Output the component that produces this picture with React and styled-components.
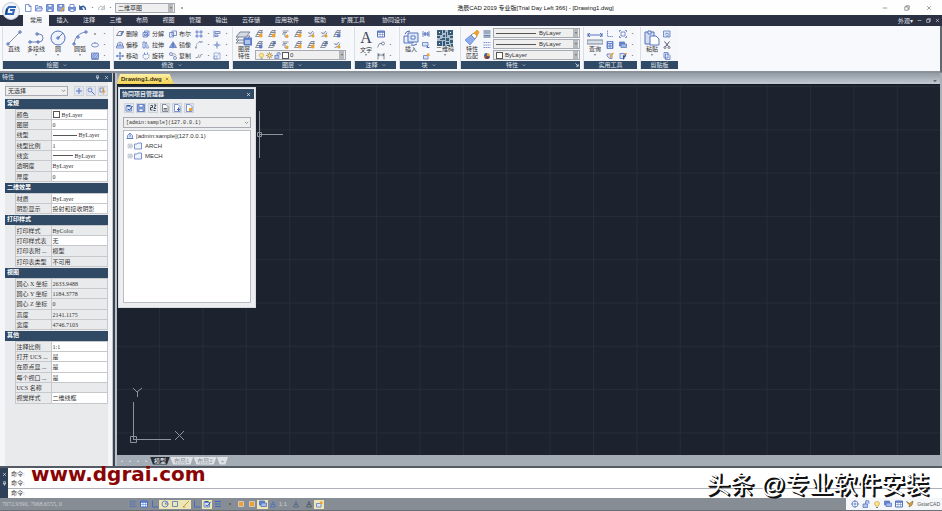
import React from 'react';
import styled, { createGlobalStyle } from 'styled-components';

const GlobalStyle = createGlobalStyle`
    * { box-sizing: border-box; }
    body {
        margin: 0;
        font-family: 'Liberation Sans', 'Noto Sans CJK SC', sans-serif;
        font-size: 6px;
        line-height: 8px;
        color: #333;
        background: #fff;
    }
    button, select, input { font: inherit; color: inherit; margin: 0; padding: 0; border: 0; background: none; border-radius: 0; }
    button { cursor: pointer; }
    select { appearance: none; min-width: 0; }
`;

const navy = '#2b3043';
const blue = '#304a66';

const Page = styled.div`
    position: relative;
    display: flex;
    flex-direction: column;
    min-height: 100vh;
    overflow: hidden;
`;

const Svg = styled.svg`
    display: block;
    flex: none;
    width: ${p => p.$size}px;
    height: ${p => p.$size}px;
    fill: none;
    stroke: ${p => p.$color || '#5573bd'};
    stroke-width: ${p => p.$stroke || 1.5};
`;

const o = '#eda12e';
const pale = '#dbe5f8';

const layerBase = (
    <g fill="#f5f6f8" stroke="#6b7486">
        <path d="M4 9h9l-3 4H1z" />
        <path d="M6 5h9l-3 4H3z" />
        <path d="M8 1h7l-3 4H5z" fill="#d4dae6" />
    </g>
);

const icons = {
    file: <path d="M3 1h7l4 4v10H3zM10 1v4h4" fill="#fff" />,
    open: <path d="M1 14V3h5l2 2h5v3M1 14l3-6h11l-2 6z" fill={pale} />,
    save: <g><path d="M1 1h14v14H1z" fill="#8ba5e3" /><path d="M4 1h8v5H4zM4 10h8v5H4z" fill="#fff" /></g>,
    saveAs: <g><path d="M1 1h13v13H1z" fill="#8ba5e3" /><path d="M4 1h7v5H4z" fill="#fff" /><path d="M7 15l7-8" stroke={o} strokeWidth="3" /></g>,
    print: <g><path d="M1 6h14v7H1z" fill="#7f9be0" /><path d="M4 6V1h8v5M4 10h8v5H4z" fill="#fff" /></g>,
    undo: <g stroke="#31599f"><path d="M3 8c5-6 10-3 10 4" strokeWidth="3" /><path d="M1 3v8h7z" fill="#31599f" /></g>,
    redo: <g stroke="#aeb4bd"><path d="M13 8C8 2 3 5 3 12" strokeWidth="2" /><path d="M15 3v8H8z" fill="#dfe2e6" /></g>,
    down: <path d="M3 5h10l-5 6z" fill="#666" stroke="none" />,
    chevron: <path d="M3 6l5 5 5-5" strokeWidth="2.5" />,
    min: <path d="M2 8h12" />,
    restore: <path d="M2 5h9v9H2zM5 5V2h9v9h-3" />,
    close: <path d="M3 3l10 10M13 3L3 13" />,
    pin: <path d="M5 2h6v7H5zM3 9h10M8 9v6" />,

    line: <g><path d="M2 14L14 2" stroke="#8a93a3" strokeWidth="1" /><path d="M1 13h2v2H1zM13 1h2v2h-2z" strokeWidth="1" /></g>,
    polyline: <g strokeWidth="1"><path d="M2 12h9a4 4 0 0 0 0-8H9" stroke="#6f83b4" /><path d="M1 11h2v2H1zM9 11h2v2H9zM8 3h2v2H8z" /></g>,
    circle: <g strokeWidth="1"><circle cx="8" cy="8" r="7" fill="#eef3fc" /><path d="M8 8l5-5M7 7h2v2H7z" /></g>,
    arc: <g strokeWidth="1"><path d="M2 14C3 7 7 3 14 2" stroke="#6f83b4" /><path d="M1 13h2v2H1zM5 6h2v2H5zM13 1h2v2h-2z" /></g>,
    dot: <circle cx="8" cy="8" r="1.5" fill="#333" stroke="none" />,
    ellipse: <g><ellipse cx="8" cy="8" rx="7" ry="4" /><path d="M8 2v3" /></g>,
    hatch: <g><path d="M1 2h14v11H1z" fill="#b4c6ee" /><path d="M3 13L12 2M8 13l7-8M1 10l7-8M1 15h14" /></g>,

    erase: <g><path d="M6 3h9l-5 8H1z" fill="#f6f6f6" stroke="#555d6b" /><path d="M10 6l5-3-4 8z" fill="#8ba5e3" /></g>,
    explode: <g><path d="M2 5h9v9H2zM5 5V2h9v9h-3" fill={pale} /><path d="M5 8h4v3H5z" /></g>,
    boolean: <path d="M1 5h8v9H1zM6 2h9v9H6z" fill="#edf1fb" />,
    array: <path d="M2 2h4v4H2zM10 2h4v4h-4zM2 10h4v4H2zM10 10h4v4h-4z" fill={pale} />,
    align: <path d="M2 1v14M4 3h10v4H4zM4 10h6v3H4z" fill={pale} />,
    offset: <g><path d="M3 10V5q5-6 10 0v5" /><path d="M1 10h14v4H1zM6 10V7q2-3 4 0v3" fill={pale} /></g>,
    stretch: <g><path d="M2 2v12h4V2z" /><path d="M8 2l6 12H8z" fill={pale} strokeDasharray="2 1" /></g>,
    mirror: <path d="M7 3v10H1zM9 3v10h6zM8 1v14" fill="#8ba5e3" />,
    fillet: <path d="M3 15V9q0-6 6-6h6M1 15v-5M8 1h7" strokeDasharray="3 1" stroke="#7681a0" />,
    trim: <path d="M8 1v5M8 10v5M1 8h5M10 8h5M6 6h4v4H6z" />,
    move: <g stroke="#4263ad"><path d="M8 2v12M2 8h12" /><path d="M8 0l2 3H6zM8 16l2-3H6zM0 8l3-2v4zM16 8l-3-2v4z" fill="#4263ad" strokeWidth=".5" /></g>,
    rotate: <g><path d="M5 3a6 6 0 1 0 6 0" strokeDasharray="3 1" /><path d="M5 1v4h4M11 1v4" /></g>,
    copy: <g><circle cx="4" cy="4" r="3" /><circle cx="12" cy="12" r="3" /><path d="M9 2l5 5M7 6l3 3" stroke="#666" /></g>,
    breakLine: <path d="M1 11h5l2-6M9 12l3-7h3" stroke="#7681a0" />,
    scale: <path d="M2 2h12v12H2zM2 8h6v6H2zM9 7l4-4" strokeWidth="1" />,

    layers: (
        <g strokeWidth="1">
            <path d="M4 9h10l-4 4H0z" fill="#e6e9ee" stroke="#7c8494" />
            <path d="M4 6h10l-4 4H0z" fill="#f5f6f8" stroke="#7c8494" />
            <path d="M4 2h10l-4 5H0z" fill="#d4dae6" stroke="#7c8494" />
            <path d="M8 8h8v7H8z" fill="#6687d1" /><path d="M9 11h5M9 13h5" stroke="#fff" />
        </g>
    ),
    layerOrange: <g>{layerBase}<path d="M9 8h5v6H9z" fill={o} stroke={o} /></g>,
    layerBlue: <g>{layerBase}<path d="M9 8h5v6H9z" fill="#5e80cd" /></g>,
    layerLine: <g stroke="#6b7486"><path d="M3 2h12M4 5h8M8 6v8h5M2 8h5" /><path d="M11 10h3v5h-3z" fill={o} stroke={o} /></g>,
    layerArrow: <g>{layerBase}<path d="M8 10l5-7M10 2h4v4" stroke="#4263ad" strokeWidth="2" /></g>,
    layerFan: <g stroke="#6b7486"><path d="M2 5l5 3 5-6M3 13l8-2 3-6" fill="#d4dae6" /><path d="M10 10h4v4h-4z" fill={o} stroke={o} /></g>,
    bulb: <g><path d="M5 12Q5 10 3 8a5 5 0 1 1 10 0q-2 2-2 4z" fill="#fce798" stroke="#cda734" /><path d="M6 15h4" stroke="#555" /></g>,
    sun: <g stroke="#8e722e"><circle cx="8" cy="8" r="4" fill="#ffe08a" /><path d="M8 0v3M8 13v3M0 8h3M13 8h3M3 3l2 2M11 11l2 2M13 3l-2 2M3 13l2-2" /></g>,
    lock: <g><path d="M2 8h9v7H2zM7 8V4a3 3 0 0 1 7 0v3" fill="#b4c6ee" /></g>,

    table: <g><path d="M1 2h14v12H1z" fill="#fff" strokeWidth="2" /><path d="M1 4h14" strokeWidth="3" /><path d="M1 9h14M6 5v9M11 5v9" strokeWidth="1" /></g>,
    leader: <g stroke="#65718a"><path d="M1 13l4-8h5" /><circle cx="12" cy="5" r="3" /></g>,
    dim: <path d="M2 2v13M14 2v13M2 6h12M5 4L2 6l3 2M11 4l3 2-3 2" stroke="#596477" />,
    insert: <g strokeWidth="1"><path d="M1 6h9v7H1z" fill="#e9effb" /><path d="M5 3h10v9H5z" fill="#dfe8fa" /><path d="M8 6h4v3H8z" fill="#fff" /><path d="M2 4Q3 1 7 1M14 14q-3 2-6 1" stroke="#4263ad" /></g>,
    attr: <path d="M2 2v12M5 5v6h2V5zM10 5v6h2V5zM14 2v12M1 8h14" />,
    blockEdit: <g><path d="M1 3h11v7H1z" fill={pale} /><path d="M9 9l5 5M9 13h6" strokeWidth="2" /></g>,
    blockNew: <g><path d="M3 7h9v7H3z" fill={pale} /><path d="M10 3h5v5h-5z" fill={o} stroke="none" /></g>,
    qr: (
        <g fill="#375a77" stroke="none">
            <path d="M0 0h16v16H0z" fill="#a9bccd" />
            <path d="M0 0h5v5H0zM11 0h5v5h-5zM0 11h5v5H0zM6 0h2v3H6zM9 2h1v5H9zM6 5h2v2H6zM0 6h3v2H0zM5 8h3v2H5zM9 8h3v3H9zM13 6h3v2h-3zM6 11h2v5H6zM9 12h3v2H9zM13 10h3v3h-3zM10 15h3v1h-3zM14 14h2v2h-2zM3 9h2v1H3z" />
            <path d="M2 2h1v1H2zM13 2h1v1h-1zM2 13h1v1H2z" fill="#fff" />
        </g>
    ),

    brush: <g strokeWidth="1"><path d="M1 10l6-5 4 4-5 6z" fill="#8facea" stroke="#7a9add" /><path d="M7 5l3-2 3 3-2 3z" fill="#fff" stroke="#888" /><path d="M10 3l3-3 2 2-2 4z" fill={o} stroke={o} /></g>,
    weights: <path d="M1 2h14M1 6h14M1 10.500h14M1 14h14" stroke="#426190" strokeWidth="2" />,
    dashes: <path d="M1 3h14M1 8h14M1 13h14" strokeDasharray="3 1" />,
    wheel: <g stroke="none"><circle cx="8" cy="8" r="6" fill={o} /><path d="M8 8V2a6 6 0 0 0-6 6z" fill="#4263ad" /><path d="M8 8l-6 1a6 6 0 0 0 7 5z" fill="#9b3d3d" /><path d="M8 8v6a6 6 0 0 0 6-5z" fill="#334b86" /></g>,
    corner: <path d="M13 5v8H5M2 2l9 9" stroke="#fff" strokeWidth="3" />,

    measure: <g><path d="M1 3v4M15 3v4M1 5h14M3 3L1 5l2 2M13 3l2 2-2 2" strokeWidth="1" /><path d="M0 10h16v4H0z" fill="#d7dfe9" stroke="#7d899c" strokeWidth="1" /></g>,
    axis: <path d="M3 1v12h12" strokeDasharray="3 1" />,
    frame: <path d="M4 4h8v8H4zM4 1V1h-3v3M12 1h3v3M15 12v3h-3M4 15H1v-3" />,
    calc: <g><path d="M2 1h12v14H2z" fill="#6687d1" /><path d="M4 3h8M4 7h2M7 7h2M10 7h2M4 10h2M7 10h2M10 10h2M4 13h2M7 13h2M10 13h2" stroke="#fff" /></g>,
    screens: <g><path d="M1 2h10v8H1z" fill="#6687d1" /><path d="M4 6h11v7H4z" fill="#a5b9e7" /></g>,
    clean: <g><path d="M2 4h10v9H7L2 8z" fill={pale} /><path d="M9 7l6-5M9 7v5" stroke={o} strokeWidth="3" /></g>,
    select: <g><path d="M2 3h9v10H2z" fill={pale} /><path d="M9 15V7l3 3 2-7" stroke="#344f92" strokeWidth="2" /><path d="M11 2h4v3h-4z" fill={o} stroke="none" /></g>,
    paste: <g strokeWidth="1"><path d="M1 2h9v12H1z" fill="#d4def3" /><path d="M4 1h3v3H4z" fill="#fff" /><path d="M6 6h6l3 3v6H6z" fill="#fff" /></g>,
    clipCopy: <g><path d="M1 2h13v12H1z" fill={pale} /><path d="M4 9l4-3 4 3M6 12h6" /></g>,
    cut: <g stroke="#4b5268"><path d="M3 1l8 10M13 1L5 11" strokeWidth="2" /><circle cx="4" cy="13" r="2" /><circle cx="12" cy="13" r="2" /></g>,
    doc: <path d="M2 1h8v11H2zM5 4h6l3 3v8H5z" fill="#e6edfb" />,
    docPlus: <g><path d="M3 1h7l4 4v10H3z" fill="#fff" /><path d="M11 7v7M8 11h6" stroke="#4263ad" strokeWidth="2" /></g>,
    docOrange: <g><path d="M3 1h7l4 4v10H3z" fill="#fff" /><path d="M8 8h6v6H8z" fill={o} stroke="none" /></g>,
    refresh: <g><path d="M2 5h11v9H2z" fill={pale} /><path d="M5 10l4 2 6-8M3 3h8" stroke="#31599f" strokeWidth="2" /></g>,
    sort: <path d="M3 3h4v4H3v5h4M10 2h4l-4 7h4M9 13h4" stroke="#444a57" strokeWidth="2" />,
    docText: <g stroke="#616875"><path d="M3 1h7l4 4v10H3z" fill="#fff" /><path d="M5 9h7M5 12h7" strokeWidth="2" /></g>,
    plus: <path d="M8 2v12M2 8h12" strokeWidth="2" />,
    find: <g><circle cx="6" cy="6" r="4" fill={pale} /><path d="M9 9l6 6" strokeWidth="2" /></g>,
    quick: <g><path d="M2 2h7v8H2z" fill={pale} /><path d="M10 1l-3 7h5l-4 7" stroke={o} strokeWidth="2" /></g>,
    server: <g><path d="M3 7l5-5 5 5v6H3z" fill={pale} /><path d="M1 13h14M8 4v6" /></g>,
    folder: <path d="M1 14V4h5l2-2h7v12z" fill="#f0f4fc" />,
    expand: <g stroke="#8b96b0"><path d="M3 3h10v10H3zM5 8h6M8 5v6M13 8h3" /></g>,

    grid: <path d="M1 3h14M1 8h14M1 13h14M4 1v14M10 1v14" strokeWidth="1" />,
    ortho: <path d="M3 1v13h12" strokeWidth="2" />,
    polar: <g><circle cx="8" cy="8" r="6" /><path d="M8 8h7M8 8l4-5" /></g>,
    snap: <path d="M3 3h10v10H3z" />,
    diag: <path d="M2 14L14 2M2 14h5" stroke="#a58a28" />,
    bars: <path d="M2 3h12M2 8h12M2 13h12" strokeWidth="2" />,
    drop: <path d="M3 3h10v10H3z" fill={o} stroke="#d7dce5" />,
    person: <g><path d="M3 14l5-11 5 11zM6 9h4" /></g>,
    gear: <g><circle cx="8" cy="8" r="6" /><circle cx="8" cy="8" r="2" /><path d="M8 0v4M8 12v4M0 8h4M12 8h4" /></g>,
    bird: <path d="M1 3l6 4 7-5-2 8-6 4 1-4z" fill={o} stroke="#83703d" />,
};

const Icon = ({ name, size = 8, color, stroke }) => (
    <Svg viewBox="0 0 16 16" $size={size} $color={color} $stroke={stroke} aria-hidden="true">{icons[name]}</Svg>
);

/* ---------- title bar and menu ---------- */

const TitleBar = styled.header`
    display: grid;
    grid-template-columns: 1fr auto 1fr;
    align-items: center;
    height: 15px;
    background: #fefefe;
`;

const QuickBar = styled.div`
    display: flex;
    align-items: center;
    gap: 3px;
    padding-left: 24px;
`;

const WindowTitle = styled.h1`
    margin: 0;
    padding-left: 129px;
    font-size: 6px;
    font-weight: 400;
    line-height: 12px;
    color: #111;
    white-space: nowrap;
`;

const WindowControls = styled.div`
    display: flex;
    justify-content: flex-end;
    gap: ${p => p.$gap}px;
    padding-right: ${p => p.$right}px;
`;

const Logo = styled.div`
    position: absolute;
    left: 2px;
    top: 2px;
    z-index: 2;
    width: 18px;
    height: 18px;
    border-radius: 50%;
    background: #f1f4f9;
    border: 1px solid #c2cad6;
`;

const MenuBar = styled.nav`
    display: flex;
    align-items: center;
    height: 11px;
    padding-left: 23px;
    background: ${navy};
    color: #e4e7ee;
`;

const MenuTab = styled.button`
    width: ${p => p.$width}px;
    height: 11px;
    line-height: 9px;
    white-space: nowrap;
    background: ${p => (p.$active ? '#f6f8fc' : 'transparent')};
    color: ${p => (p.$active ? '#333' : '#e4e7ee')};
`;

const MenuEnd = styled.div`
    display: flex;
    align-items: center;
    gap: 4px;
    margin-left: auto;
    padding-right: 2px;
`;

const IconButton = styled.button`
    display: flex;
    align-items: center;
    gap: ${p => p.$gap || 0}px;
    white-space: nowrap;
`;

/* ---------- ribbon ---------- */

const Ribbon = styled.div`
    display: flex;
    gap: 3px;
    height: 47px;
    padding: 1px 2px 2px;
    background: #f8f9fc;
    border-right: 2px solid #62676f;
    border-bottom: 2px solid #8a9199;
`;

const Group = styled.section`
    display: flex;
    flex-direction: column;
    flex: 0 0 ${p => p.$width}px;
    border-left: 1px solid #dadee5;
    background: #f6f7fa;
`;

const GroupBody = styled.div`
    display: flex;
    flex: 1;
    padding-left: ${p => p.$pad || 0}px;
`;

const Caption = styled.h2`
    display: flex;
    align-items: center;
    justify-content: center;
    gap: 4px;
    height: 8px;
    margin: 0;
    font-size: 6px;
    font-weight: 400;
    line-height: 8px;
    color: #e2e7ee;
    background: ${blue};
`;

const CaptionEnd = styled.span`
    margin-left: auto;
    padding-right: 1px;
`;

const CaptionText = styled.span`
    display: flex;
    align-items: center;
    gap: 4px;
    margin-left: ${p => (p.$corner ? 'auto' : '0')};
`;

const Big = styled.button`
    display: flex;
    flex-direction: column;
    align-items: center;
    width: 22px;
    padding-top: 3px;
    line-height: 7px;
    white-space: nowrap;
`;

const Tools = styled.div`
    display: grid;
    grid-template-columns: ${p => p.$cols};
    grid-auto-rows: 11px;
    align-items: center;
    padding-top: 1px;
`;

const Combo = styled.label`
    display: flex;
    align-items: center;
    gap: ${p => p.$gap || 0}px;
    width: ${p => (p.$width ? `${p.$width}px` : 'auto')};
    height: ${p => p.$height || 10}px;
    padding: 0 1px 0 2px;
    border: 1px solid #a7abb1;
    background: ${p => p.$bg || '#efeff0'};

    select { flex: 1; height: 8px; }
`;

const ComboArrow = styled.span`
    display: flex;
    align-items: center;
    justify-content: center;
    width: 5px;
    height: 100%;
    background: ${p => (p.$plain ? 'transparent' : '#b5b8bd')};
`;

const Stack = styled.div`
    display: flex;
    flex-direction: column;
    flex: 1;
    padding-right: ${p => p.$right || 0}px;
`;

const ComboStack = styled(Stack)`
    padding-top: 1px;
    gap: 1px;
`;

const Swatch = styled.span`
    flex: none;
    width: 7px;
    height: 7px;
    border: 1px solid #555;
    background: #fff;
`;

const Rule = styled.span`
    flex: none;
    width: ${p => p.$width}px;
    height: 1px;
    background: #555;
`;

const BigTool = ({ icon, label, size = 16, arrow = true, children }) => (
    <Big type="button">
        {children || <Icon name={icon} size={size} />}
        <span>{label}</span>
        {arrow && <Icon name="down" size={4} />}
    </Big>
);

const Tool = ({ icon, label, arrow }) => (
    <IconButton type="button" $gap={arrow ? 4 : 2} aria-label={label || icon}>
        <Icon name={icon} />
        {label && <span>{label}</span>}
        {arrow && <Icon name="down" size={3} />}
    </IconButton>
);

const RibbonGroup = ({ title, width, pad, arrow = true, corner, children }) => (
    <Group $width={width}>
        <GroupBody $pad={pad}>{children}</GroupBody>
        <Caption>
            <CaptionText $corner={corner}>
                {title}
                {arrow && <Icon name="chevron" size={4} color="#cfd6df" />}
            </CaptionText>
            {corner && <CaptionEnd><Icon name="corner" size={4} /></CaptionEnd>}
        </Caption>
    </Group>
);

const BigLetter = styled.span`
    height: 16px;
    font-family: 'Liberation Serif', serif;
    font-size: 16px;
    line-height: 16px;
    color: #3c4658;
`;

const LetterLabel = styled.span`
    display: block;
    padding-top: 1px;
    line-height: 6px;
`;

const TwoLine = styled.span`
    display: block;
    width: 12px;
    white-space: normal;
`;

/* ---------- properties palette ---------- */

const Workspace = styled.div`
    display: flex;
    flex: 1;
    background: #8b939b;
`;

const Palette = styled.aside`
    display: flex;
    flex-direction: column;
    flex: 0 0 113px;
    background: #f4f6f9;
    border-right: 1px solid #c1c6cc;
`;

const PaletteTitle = styled.h2`
    display: flex;
    align-items: center;
    gap: 4px;
    height: 9px;
    margin: 0;
    padding: 0 3px 0 2px;
    font-size: 6px;
    font-weight: 400;
    line-height: 9px;
    color: #e2e7ee;
    background: ${blue};

    span { flex: 1; }
`;

const PaletteBody = styled.div`
    flex: 1;
    margin: 0 4px 0 5px;
    background: #e9eaeb;
`;

const PaletteTools = styled.div`
    display: flex;
    align-items: center;
    gap: 2px;
    height: 17px;

    label { flex: 1; margin-right: 4px; }
`;

const SquareButton = styled.button`
    display: flex;
    align-items: center;
    justify-content: center;
    width: 10px;
    height: 10px;
    border: 1px solid #ced3da;
    background: #e2e7ef;
`;

const PropertyTable = styled.table`
    width: 100%;
    margin-bottom: 1px;
    table-layout: fixed;
    border-collapse: collapse;
    font-family: 'Liberation Serif', 'Noto Sans CJK SC', serif;

    caption {
        height: 10px;
        padding-left: 2px;
        font-weight: 700;
        line-height: 9px;
        text-align: left;
        color: #fff;
        background: ${blue};
    }
    col:first-child { width: 10px; }
    col:nth-child(2) { width: 36px; }
    tr { height: 10px; }
    tr:nth-child(3n) { height: 11px; }
    th, td {
        padding: 0 1px;
        border: 1px solid #c6c8cb;
        font-weight: 400;
        line-height: 8px;
        text-align: left;
        white-space: nowrap;
        overflow: hidden;
    }
    td:first-child { border: 0; }
`;

const ValueCell = styled.td`
    background: ${p => (p.$locked ? '#e9eaeb' : '#fff')};
`;

const Value = styled.div`
    display: flex;
    align-items: center;
    gap: 2px;
`;

const sections = [
    {
        title: '常规',
        rows: [
            ['颜色', 'ByLayer', { swatch: true }],
            ['图层', '0'],
            ['线型', 'ByLayer', { rule: 24 }],
            ['线型比例', '1'],
            ['线宽', 'ByLayer', { rule: 20 }],
            ['透明度', 'ByLayer'],
            ['厚度', '0'],
        ],
    },
    {
        title: '二维效果',
        rows: [
            ['材质', 'ByLayer'],
            ['阴影显示', '投射和接收阴影'],
        ],
    },
    {
        title: '打印样式',
        rows: [
            ['打印样式', 'ByColor', { locked: true }],
            ['打印样式表', '无'],
            ['打印表附 ...', '模型', { locked: true }],
            ['打印表类型', '不可用', { locked: true }],
        ],
    },
    {
        title: '视图',
        rows: [
            ['圆心 X 坐标', '2633.9488', { locked: true }],
            ['圆心 Y 坐标', '1184.3778', { locked: true }],
            ['圆心 Z 坐标', '0', { locked: true }],
            ['高度', '2141.1175', { locked: true }],
            ['宽度', '4746.7103', { locked: true }],
        ],
    },
    {
        title: '其他',
        rows: [
            ['注释比例', '1:1'],
            ['打开 UCS ...', '是'],
            ['在原点显 ...', '是'],
            ['每个视口 ...', '是'],
            ['UCS 名称', '', { locked: true }],
            ['视觉样式', '二维线框'],
        ],
    },
];

const PropertySection = ({ title, rows }) => (
    <PropertyTable>
        <caption>{title}</caption>
        <colgroup><col /><col /><col /></colgroup>
        <tbody>
            {rows.map(([label, value, opts = {}]) => (
                <tr key={label}>
                    <td />
                    <th scope="row">{label}</th>
                    <ValueCell $locked={opts.locked}>
                        <Value>
                            {opts.swatch && <Swatch />}
                            {opts.rule && <Rule $width={opts.rule} />}
                            {value}
                        </Value>
                    </ValueCell>
                </tr>
            ))}
        </tbody>
    </PropertyTable>
);

/* ---------- drawing area ---------- */

const Drawing = styled.main`
    display: flex;
    flex-direction: column;
    flex: 1;
    min-width: 0;
    border-left: 2px solid #3b434f;
    border-right: 2px solid #a9b0b8;
    padding-left: 2px;
    background: #b9c0c9;
`;

const FileTabs = styled.div`
    display: flex;
    align-items: flex-end;
    justify-content: space-between;
    height: 11px;
    padding-right: 2px;
    background: linear-gradient(#929ba4, #c3cad3);
`;

const FileTab = styled.button`
    display: flex;
    align-items: center;
    gap: 3px;
    height: 10px;
    padding: 0 5px 0 4px;
    font-weight: 700;
    color: #38321c;
    background: linear-gradient(#fdf0a4, #f3d354);
    clip-path: polygon(3px 0, calc(100% - 4px) 0, 100% 100%, 0 100%);
`;

const Canvas = styled.div`
    position: relative;
    flex: 1;
    background: #1c232e;
    border-top: 1px solid #141a23;
`;

const CanvasArt = styled.svg`
    position: absolute;
    inset: 0;
    width: 100%;
    height: 100%;
`;

const UcsMark = styled.svg`
    position: absolute;
    left: 12px;
    bottom: 8px;
    width: 60px;
    height: 60px;
`;

const LayoutTabs = styled.div`
    display: flex;
    align-items: center;
    height: 11px;
    padding-left: 1px;
    background: #a3abb5;
    color: #dfe3e8;
`;

const Pager = styled.button`
    width: 8px;
    line-height: 8px;
`;

const LayoutTab = styled.button`
    height: 8px;
    padding: 0 4px;
    line-height: 8px;
    white-space: nowrap;
    color: ${p => (p.$active ? '#fff' : '#8d939c')};
    background: ${p => (p.$active ? '#252c36' : '#dfe2e6')};
    clip-path: polygon(0 0, 100% 0, calc(100% - 3px) 100%, 3px 100%);
`;

const ProjectWindow = styled.section`
    position: absolute;
    left: 1px;
    top: 2px;
    width: 138px;
    height: 221px;
    display: flex;
    flex-direction: column;
    padding: 1px;
    background: #eceef0;
    border: 1px solid #d7dbe0;
`;

const ProjectTitle = styled(PaletteTitle)`
    height: 10px;
    line-height: 10px;
    font-weight: 700;
`;

const ProjectTools = styled.div`
    display: flex;
    gap: 2px;
    padding: 4px 4px;
`;

const ProjectContent = styled.div`
    display: flex;
    flex: 1;
    flex-direction: column;
    gap: 2px;
    padding: 0 3px 3px 3px;

    select { font-family: 'Liberation Mono', monospace; font-size: 5px; }
`;

const Tree = styled.ul`
    flex: 1;
    margin: 0;
    padding: 0 1px;
    list-style: none;
    background: #fff;
    border: 1px solid #b9bdc3;
`;

const TreeItem = styled.li`
    display: flex;
    align-items: center;
    gap: ${p => (p.$child ? 1 : 2)}px;
    height: 10px;
    padding-left: ${p => (p.$child ? 2 : 1)}px;

    span { padding-left: ${p => (p.$child ? 2 : 0)}px; }
`;

/* ---------- command line and status bar ---------- */

const Command = styled.section`
    display: flex;
    height: 32px;
    background: #fff;
    border-top: 2px solid #555b64;
`;

const CommandGrip = styled.div`
    display: flex;
    flex-direction: column;
    gap: 4px;
    width: 8px;
    padding: 4px 2px;
    background: #2f4059;
`;

const CommandBody = styled.div`
    flex: 1;
    padding: 2px 3px 0;
    line-height: 9px;

    p { margin: 0; }
`;

const CommandLine = styled.label`
    display: flex;
    margin: 0 -3px;
    padding-left: 3px;
    border-top: 1px solid #aeb2b8;

    input { flex: 1; outline: 0; }
`;

const StatusBar = styled.footer`
    display: flex;
    align-items: center;
    height: 13px;
    background: #868d95;
    border-bottom: 1px solid #6a7078;
    color: #c9cdd2;
`;

const Coords = styled.span`
    width: 128px;
    padding-left: 2px;
    font-family: 'Liberation Serif', serif;
`;

const Toggle = styled.button`
    display: flex;
    align-items: center;
    justify-content: center;
    width: ${p => p.$width || 10}px;
    height: 9px;
    background: ${p => (p.$on ? '#eee6b4' : 'transparent')};
    white-space: nowrap;
`;

const StatusEnd = styled.div`
    display: flex;
    align-items: center;
    gap: 3px;
    height: 100%;
    margin-left: auto;
    padding: 0 2px 0 5px;
    font-size: 5px;
    color: #555;
    background: #f4f6f9;
`;

const SiteMark = styled.div`
    position: absolute;
    left: 31px;
    bottom: 25px;
    font-family: 'DejaVu Sans', sans-serif;
    font-size: 20px;
    font-weight: 700;
    line-height: 24px;
    color: #8b0404;
`;

const AuthorMark = styled.div`
    position: absolute;
    right: 13px;
    bottom: 11px;
    font-family: 'Liberation Sans', 'Noto Sans CJK SC', sans-serif;
    font-size: 24px;
    line-height: 30px;
    color: #fff;
    text-shadow: 1px 1px 0 #111, 2px 1px 0 #111, 2px 2px 0 #111;
`;

const menus = [
    ['常用', 26], ['插入', 27], ['注释', 26], ['三维', 27], ['布局', 26], ['视图', 27], ['管理', 26],
    ['输出', 27], ['云存储', 32], ['应用软件', 40], ['帮助', 26], ['扩展工具', 40], ['协同设计', 42],
];

const layerTools = [
    'layerOrange', 'layerOrange', 'layerLine', 'layerOrange', 'layerFan', 'layerFan', 'layerBlue',
    'layerBlue', 'layerArrow', 'layerLine', 'layerOrange', 'layerOrange', 'layerArrow', 'layerFan',
];

const toggles = [
    ['grid'], ['table', 12], ['ortho', 9], ['polar', 11, true], ['snap', 10, true], ['diag', 11, true], ['ortho', 11],
    ['refresh', 10, true], ['bars', 12], ['dot', 11], ['drop', 11], ['drop', 11], ['screens', 11, true], ['person'],
];

const Arrow = ({ plain }) => (
    <ComboArrow $plain={plain}><Icon name={plain ? 'chevron' : 'down'} size={plain ? 5 : 4} color="#777" /></ComboArrow>
);

const App = () => (
    <Page>
        <GlobalStyle />
        <Logo>
            <svg viewBox="0 0 16 16" width="16" height="16" fill="none" stroke="#2f66b5" strokeWidth="2">
                <path d="M13 4H6L4 6 3 11h7l1-4H7" />
                <path d="M4 6l-1 5" stroke="#16427f" />
            </svg>
        </Logo>
        <TitleBar>
            <QuickBar>
                {['file', 'open', 'save', 'saveAs', 'print'].map(n => <Tool key={n} icon={n} />)}
                <Tool icon="undo" arrow />
                <Tool icon="redo" arrow />
                <Combo $width={60}>
                    <select aria-label="工作空间" defaultValue="a"><option value="a">二维草图</option></select>
                    <Arrow />
                </Combo>
                <Tool icon="dot" />
            </QuickBar>
            <WindowTitle>浩辰CAD 2019 专业版[Trial Day Left 366] - [Drawing1.dwg]</WindowTitle>
            <WindowControls $gap={16} $right={10}>
                {['min', 'restore', 'close'].map(n => (
                    <IconButton key={n} aria-label={n}><Icon name={n} size={6} color="#555" /></IconButton>
                ))}
            </WindowControls>
        </TitleBar>
        <MenuBar>
            {menus.map(([label, width], i) => <MenuTab key={label} $width={width} $active={i === 0}>{label}</MenuTab>)}
            <MenuEnd>
                <IconButton>外观▾</IconButton>
                {['min', 'restore', 'close'].map(n => (
                    <IconButton key={n} aria-label={n}><Icon name={n} size={5} color="#d5d9e0" stroke={2} /></IconButton>
                ))}
            </MenuEnd>
        </MenuBar>

        <Ribbon>
            <RibbonGroup title="绘图" width={108}>
                <BigTool icon="line" label="直线" arrow={false} />
                <BigTool icon="polyline" label="多段线" />
                <BigTool icon="circle" label="圆" />
                <BigTool icon="arc" label="圆弧" />
                <Tools $cols="18px">
                    <Tool icon="dot" arrow />
                    <Tool icon="ellipse" arrow />
                    <Tool icon="hatch" arrow />
                </Tools>
            </RibbonGroup>
            <RibbonGroup title="修改" width={116} pad={2}>
                <Tools $cols="26px 27px 26px 18px 16px">
                    <Tool icon="erase" label="删除" />
                    <Tool icon="explode" label="分解" />
                    <Tool icon="boolean" label="布尔" />
                    <Tool icon="array" arrow />
                    <Tool icon="align" arrow />
                    <Tool icon="offset" label="偏移" />
                    <Tool icon="stretch" label="拉伸" />
                    <Tool icon="mirror" label="镜像" />
                    <Tool icon="fillet" arrow />
                    <Tool icon="trim" arrow />
                    <Tool icon="move" label="移动" />
                    <Tool icon="rotate" label="旋转" />
                    <Tool icon="copy" label="复制" />
                    <Tool icon="breakLine" arrow />
                    <Tool icon="scale" arrow />
                </Tools>
            </RibbonGroup>
            <RibbonGroup title="图层" width={119}>
                <BigTool icon="layers" label={<TwoLine>图层特性</TwoLine>} arrow={false} />
                <Stack $right={5}>
                    <Tools $cols="repeat(7, 1fr)">
                        {layerTools.map((n, i) => <Tool key={i} icon={n} />)}
                    </Tools>
                    <Combo $gap={1}>
                        <Icon name="bulb" size={7} />
                        <Icon name="sun" size={7} />
                        <Icon name="lock" size={7} />
                        <Swatch />
                        <select aria-label="图层" defaultValue="0"><option>0</option></select>
                        <Arrow />
                    </Combo>
                </Stack>
            </RibbonGroup>
            <RibbonGroup title="注释" width={42}>
                <BigTool label={<LetterLabel>文字</LetterLabel>}><BigLetter>A</BigLetter></BigTool>
                <Tools $cols="18px">
                    <Tool icon="table" />
                    <Tool icon="leader" arrow />
                    <Tool icon="dim" arrow />
                </Tools>
            </RibbonGroup>
            <RibbonGroup title="块" width={58}>
                <BigTool icon="insert" label="插入" arrow={false} />
                <Tools $cols="12px">
                    <Tool icon="attr" />
                    <Tool icon="blockEdit" />
                    <Tool icon="blockNew" />
                </Tools>
                <BigTool icon="qr" label="二维码" />
            </RibbonGroup>
            <RibbonGroup title="特性" width={120} corner>
                <BigTool icon="brush" label={<TwoLine>特性匹配</TwoLine>} arrow={false} />
                <Tools $cols="10px">
                    <Tool icon="weights" />
                    <Tool icon="dashes" />
                    <Tool icon="wheel" />
                </Tools>
                <ComboStack>
                    <Combo $gap={3}>
                        <Rule $width={40} />
                        <select aria-label="线宽"><option>ByLayer</option></select>
                        <Arrow />
                    </Combo>
                    <Combo $gap={3}>
                        <Rule $width={40} />
                        <select aria-label="线型"><option>ByLayer</option></select>
                        <Arrow />
                    </Combo>
                    <Combo $gap={2}>
                        <Swatch />
                        <select aria-label="颜色"><option>ByLayer</option></select>
                        <Arrow />
                    </Combo>
                </ComboStack>
            </RibbonGroup>
            <RibbonGroup title="实用工具" width={54} arrow={false}>
                <BigTool icon="measure" label="查询" />
                <Tools $cols="13px 17px">
                    <Tool icon="axis" />
                    <Tool icon="frame" arrow />
                    <Tool icon="calc" />
                    <Tool icon="screens" arrow />
                    <Tool icon="clean" />
                    <Tool icon="select" arrow />
                </Tools>
            </RibbonGroup>
            <RibbonGroup title="剪贴板" width={38} arrow={false}>
                <BigTool icon="paste" label="粘贴" />
                <Tools $cols="12px">
                    <Tool icon="clipCopy" />
                    <Tool icon="cut" />
                    <Tool icon="doc" />
                </Tools>
            </RibbonGroup>
        </Ribbon>

        <Workspace>
            <Palette>
                <PaletteTitle>
                    <span>特性</span>
                    <Icon name="pin" size={5} color="#dfe5ee" stroke={2} />
                    <Icon name="close" size={5} color="#dfe5ee" stroke={2} />
                </PaletteTitle>
                <PaletteBody>
                    <PaletteTools>
                        <Combo>
                            <select aria-label="选择对象"><option>无选择</option></select>
                            <Arrow plain />
                        </Combo>
                        {['plus', 'find', 'quick'].map(n => (
                            <SquareButton key={n} aria-label={n}><Icon name={n} /></SquareButton>
                        ))}
                    </PaletteTools>
                    {sections.map(s => <PropertySection key={s.title} {...s} />)}
                </PaletteBody>
            </Palette>

            <Drawing>
                <FileTabs>
                    <FileTab>Drawing1.dwg <Icon name="close" size={4} color="#8b7a33" stroke={3} /></FileTab>
                    <IconButton aria-label="图纸列表"><Icon name="down" size={6} /></IconButton>
                </FileTabs>
                <Canvas>
                    <CanvasArt>
                        <defs>
                            <pattern id="major" x="42" y="1" width="43.4" height="43.3" patternUnits="userSpaceOnUse">
                                <path d="M0 .5H44M.5 0V44" stroke="#242d38" fill="none" />
                            </pattern>
                        </defs>
                        <rect width="100%" height="100%" fill="url(#major)" />
                        <g stroke="#8d939a" fill="none">
                            <path d="M142.500 26v47M142 49.500h24" />
                            <path d="M140.500 47.500h4v4h-4z" />
                        </g>
                    </CanvasArt>
                    <UcsMark viewBox="0 0 60 60" fill="none" stroke="#8d939a">
                        <path d="M4.500 15v38M4 52.500h38M1.500 49.500h6v6h-6z" />
                        <path d="M4 1l4 4 5-4M8.500 5v5M46 44l9 9M55 44l-9 9" />
                    </UcsMark>
                    <ProjectWindow>
                        <ProjectTitle><span>协同项目管理器</span><Icon name="close" size={5} color="#fff" stroke={2} /></ProjectTitle>
                        <ProjectTools>
                            {['refresh', 'save', 'sort', 'docText', 'docPlus', 'docOrange'].map(n => (
                                <SquareButton key={n} aria-label={n}><Icon name={n} /></SquareButton>
                            ))}
                        </ProjectTools>
                        <ProjectContent>
                            <Combo $height={11}>
                                <select aria-label="服务器"><option>[admin:sample](127.0.0.1)</option></select>
                                <Arrow plain />
                            </Combo>
                            <Tree>
                                <TreeItem><Icon name="server" /><span>[admin:sample](127.0.0.1)</span></TreeItem>
                                {['ARCH', 'MECH'].map(n => (
                                    <TreeItem key={n} $child><Icon name="expand" size={6} /><Icon name="folder" /><span>{n}</span></TreeItem>
                                ))}
                            </Tree>
                        </ProjectContent>
                    </ProjectWindow>
                </Canvas>
                <LayoutTabs>
                    {['first', 'prev', 'next', 'last'].map(n => <Pager key={n} aria-label={n}>•</Pager>)}
                    <LayoutTab $active>模型</LayoutTab>
                    <LayoutTab>布局1</LayoutTab>
                    <LayoutTab>布局2</LayoutTab>
                    <LayoutTab>+</LayoutTab>
                </LayoutTabs>
            </Drawing>
        </Workspace>

        <Command>
            <CommandGrip>
                <Icon name="close" size={5} color="#dfe5ee" stroke={2} />
                <Icon name="pin" size={5} color="#dfe5ee" stroke={2} />
            </CommandGrip>
            <CommandBody>
                <p>命令:</p>
                <p>命令:</p>
                <CommandLine>命令: <input type="text" /></CommandLine>
            </CommandBody>
        </Command>
        <StatusBar>
            <Coords>7072.9390, 7968.6555, 0</Coords>
            {toggles.map(([name, width, on], i) => (
                <Toggle key={i} $width={width} $on={on} aria-label={name}><Icon name={name} color="#456cc4" /></Toggle>
            ))}
            <Toggle>1:1</Toggle>
            <Toggle $width={16}><Icon name="person" color="#4c5f85" /></Toggle>
            <Toggle><Icon name="person" color="#454c58" /></Toggle>
            <Toggle $on><Icon name="blockNew" /></Toggle>
            <StatusEnd>
                {['gear', 'lock', 'bulb', 'screens', 'table', 'bird'].map(n => <Tool key={n} icon={n} />)}
                <span>GstarCAD</span>
            </StatusEnd>
        </StatusBar>
        <SiteMark>www.dgrai.com</SiteMark>
        <AuthorMark>头条 @专业软件安装</AuthorMark>
    </Page>
);

export default App;
